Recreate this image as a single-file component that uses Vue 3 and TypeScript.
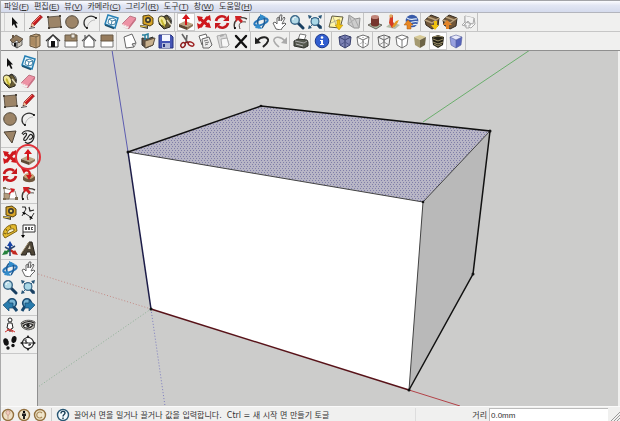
<script setup lang="ts">
import { ref } from 'vue'

interface Tool {
  id: string
  label: string
}
type Group = Tool[]

const t = (id: string, label: string): Tool => ({ id, label })

const menus: { name: string; key: string }[] = [
  { name: '파일', key: 'F' },
  { name: '편집', key: 'E' },
  { name: '뷰', key: 'V' },
  { name: '카메라', key: 'C' },
  { name: '그리기', key: 'R' },
  { name: '도구', key: 'T' },
  { name: '창', key: 'W' },
  { name: '도움말', key: 'H' },
]

const mainGroups: Group[] = [
  [t('select', '선택')],
  [t('pencil', '선'), t('rect', '사각형'), t('circle', '원'), t('arc', '호')],
  [t('component', '구성요소 만들기'), t('eraser', '지우개'), t('tape', '줄자'), t('paint', '페인트')],
  [t('push', '밀기/끌기'), t('move', '이동'), t('rotate', '회전'), t('offset', '오프셋')],
  [t('orbit', '궤도'), t('pan', '팬'), t('zoom', '확대/축소'), t('extents', '범위 확대')],
  [t('map', '위치 추가'), t('terrain', '지형 토글')],
  [t('building', '건물 추가'), t('texture', '사진 텍스처'), t('earth', '지구에서 미리보기')],
  [t('getmodel', '모델 가져오기'), t('sharemodel', '모델 공유'), t('sharecomp', '구성요소 공유')],
]

const viewGroups: Group[] = [
  [t('iso', '등각'), t('top', '위'), t('front', '정면'), t('right', '오른쪽'), t('back', '뒤'), t('left', '왼쪽')],
]
const fileGroups: Group[] = [
  [t('new', '새로 만들기'), t('open', '열기'), t('save', '저장')],
  [t('cut', '잘라내기'), t('copy', '복사'), t('paste', '붙여넣기'), t('delete', '지우기')],
  [t('undo', '실행 취소'), t('redo', '다시 실행')],
  [t('print', '인쇄')],
  [t('info', '모델 정보')],
]
const styleGroups: Group[] = [
  [t('xray', 'X선'), t('backedges', '뒤쪽 가장자리')],
  [t('wire', '와이어프레임'), t('hidden', '숨은선'), t('shaded', '음영'), t('textured', '텍스처 음영'), t('mono', '단색')],
]
const secondRow: Group[][] = [viewGroups, fileGroups, styleGroups]

const sideGroups: Group[] = [
  [t('select', '선택'), t('component', '구성요소 만들기'), t('paint', '페인트'), t('eraser', '지우개')],
  [t('rect', '사각형'), t('pencil', '선'), t('circle', '원'), t('arc', '호'), t('polygon', '다각형'), t('freehand', '자유곡선')],
  [t('move', '이동'), t('push', '밀기/끌기'), t('rotate', '회전'), t('follow', '따라가기'), t('scale', '배율'), t('offset', '오프셋')],
  [t('tape', '줄자'), t('dimension', '치수'), t('protractor', '각도기'), t('text', '텍스트'), t('axes', '축'), t('text3d', '3D 텍스트')],
  [t('orbit', '궤도'), t('pan', '팬'), t('zoom', '확대/축소'), t('extents', '범위 확대'), t('previous', '이전'), t('next', '다음')],
  [t('camera', '카메라 배치'), t('look', '둘러보기'), t('walk', '이동 보기'), t('section', '단면')],
]

const active = ref('push')
const renderStyle = ref('textured')
const distance = ref('0.0mm')

function choose(id: string) {
  active.value = id
}
function isStyle(id: string) {
  return renderStyle.value === id
}
</script>

<template>
  <div class="window">
    <svg class="defs" aria-hidden="true">
      <defs>
        <symbol id="select" viewBox="0 0 16 16"><path d="M5 3v9l2-2 2 4 1.500-.7-1.800-3.800H11z" fill="#111" /></symbol>
        <symbol id="pencil" viewBox="0 0 16 16"><path d="M1 14.500l6-1" stroke="#555" fill="none" /><path d="M3 13l1-4 8-8 2.500 2-8 8.500z" fill="#c81c20" stroke="#7c1414" stroke-width=".6" /><path d="M3 13l1-4 2.400 2.500z" fill="#eecb9d" /><path d="M5 9l7-7" stroke="#f57d72" /><path d="M2.500 13.500l1-1.500.6.700z" fill="#111" /></symbol>
        <symbol id="rect" viewBox="0 0 16 16"><path d="M2 3l12-1 1 11-12 1z" fill="#9c8467" stroke="#4d4336" stroke-width=".8" /><path d="M1 2h2v2H1zM13 1h2v2h-2zM14 12h2v2h-2zM2 13h2v2H2z" fill="#4a4238" /></symbol>
        <symbol id="circle" viewBox="0 0 16 16"><circle cx="8" cy="8" r="6.300" fill="#9c8467" stroke="#51483b" /></symbol>
        <symbol id="arc" viewBox="0 0 16 16"><path d="M14 4C9 0 2 3 2 9c0 3 1 4 3 5" fill="none" stroke="#333" stroke-width="1.300" /><path d="M5 14c1-5 4-8 8-8" fill="none" stroke="#aaa" stroke-width=".8" /><circle cx="5" cy="14" r="1" /><circle cx="14" cy="4" r="1" /></symbol>
        <symbol id="polygon" viewBox="0 0 16 16"><path d="M2 3l12-1-4 12z" fill="#9c8467" stroke="#4d4336" /></symbol>
        <symbol id="freehand" viewBox="0 0 16 16"><path d="M2 5C4 0 14 1 14 7s-6 9-9 6M3 6c3-4 5-1 2 2s0 5 2 2 3-6 5-4-1 5-3 4" fill="none" stroke="#222" stroke-width="1.200" /></symbol>
        <symbol id="component" viewBox="0 0 16 16"><path d="M5 1l10 3-3 10-10-4z" fill="#e3f3fa" stroke="#2680b5" stroke-width="1.500" /><path d="M6 5l4-1 3 2-1 4-4 1-3-2z" fill="#fff" stroke="#1d668f" stroke-width=".8" /><path d="M6 5l3 2 4-1M9 7l-1 4" fill="none" stroke="#1d668f" stroke-width=".8" /><path d="M2 11l9 3.500" stroke="#1e516e" stroke-width="1.500" /></symbol>
        <symbol id="eraser" viewBox="0 0 16 16"><path d="M1 10l8-8 6 2-7 9z" fill="#ed92a5" stroke="#a75c6c" stroke-width=".7" /><path d="M1 10v3l6 2 1-2 7-9v2l-7 9-7-2z" fill="#c86c81" /><path d="M1 10l7 3" stroke="#ffd1d7" /></symbol>
        <symbol id="tape" viewBox="0 0 16 16"><path d="M4 2l6-1 4 3v6l-3 2-7-2z" fill="#d8a426" stroke="#55420e" /><circle cx="9" cy="6" r="3" fill="#3c3a31" /><circle cx="9" cy="6" r="1.300" fill="#e4cf70" /><path d="M1 11l8 1v3l-8-2z" fill="#3e3c35" /><path d="M1 12l7 1" stroke="#e9c746" /></symbol>
        <symbol id="paint" viewBox="0 0 16 16"><path d="M4 4l6-3 4 6-1 6-6 2-5-5z" fill="#695d35" stroke="#2d2a20" /><ellipse cx="5.500" cy="7" rx="3.800" ry="5.200" transform="rotate(-28 5.500 7)" fill="#f1e899" stroke="#393424" /><path d="M4 6c2 1 1 5 4 6" stroke="#c5b730" stroke-width="2" fill="none" /><path d="M8 2c6-1 7 4 6 8" stroke="#333" fill="none" /><path d="M10 6l4 5" stroke="#ddd6bd" stroke-width="1.500" /></symbol>
        <symbol id="push" viewBox="0 0 16 16"><path d="M1 10l6-3 8 3-6 3z" fill="#bba481" /><path d="M1 10l8 3v3l-8-3z" fill="#5f4a34" /><path d="M9 13l6-3v2l-6 4z" fill="#8b7457" /><path d="M7 11V5H4l4-5 4 5H9v6z" fill="#d5161b" /></symbol>
        <symbol id="move" viewBox="0 0 16 16"><path d="M3 4l10 8M12 3L4 13" stroke="#cf181d" stroke-width="3" /><path d="M1 2l6 1-4 5zM14 1l1 6-6-3zM15 14l-6-1 4-5zM2 15l-1-6 6 3z" fill="#cf181d" /></symbol>
        <symbol id="rotate" viewBox="0 0 16 16"><path d="M2 7c1-5 7-6 10-3M14 9c-1 5-7 6-10 3" fill="none" stroke="#c7191e" stroke-width="2.600" /><path d="M15 1v6H9zM1 15V9h6z" fill="#c7191e" /></symbol>
        <symbol id="offset" viewBox="0 0 16 16"><path d="M3 15C0 7 7 1 15 5" fill="none" stroke="#433b36" stroke-width="1.400" /><path d="M8 15c-2-5 0-8 6-7" fill="none" stroke="#58504a" /><path d="M3 2l7 0-2 2 3 3-2 2-3-3-2 2z" fill="#cf2023" /><circle cx="3" cy="14" r="1" /></symbol>
        <symbol id="follow" viewBox="0 0 16 16"><path d="M3 10c2-4 10-4 12 0v3c-2 3-9 3-12 0z" fill="#6e563d" /><ellipse cx="9" cy="9" rx="5" ry="3" fill="#c6a273" /><path d="M4 4c5-2 7 2 5 6" stroke="#d61a1e" stroke-width="2.200" fill="none" /><path d="M1 1h6L4 7z" fill="#cf181d" /><path d="M6 8l3 5 3-5z" fill="#cf181d" /></symbol>
        <symbol id="scale" viewBox="0 0 16 16"><path d="M2 3l11 3 2 8-12 0z" fill="#fff" stroke="#8a8176" /><path d="M2 8l6 1-1 5H2z" fill="#b49d7e" stroke="#685c4b" stroke-width=".7" /><path d="M7 9l4-4" stroke="#cf1c20" stroke-width="1.500" /><path d="M8 3l5 1-2 4z" fill="#cf1c20" /><path d="M1 2h3v2H1zM13 12h3v3h-3zM1 13h3v2H1z" fill="#7b6a50" /></symbol>
        <symbol id="orbit" viewBox="0 0 16 16"><ellipse cx="8" cy="8" rx="7" ry="2.800" transform="rotate(-20 8 8)" fill="none" stroke="#2979bd" stroke-width="2" /><path d="M6 14C3 9 5 2 9 2c4 1 3 9 0 12" fill="none" stroke="#215b91" stroke-width="1.600" /><path d="M7 0l6 3-6 3zM5 9l4 6-7-1z" fill="#338dcb" /></symbol>
        <symbol id="pan" viewBox="0 0 16 16"><path d="M5 15L2 9l2-1 2 2V4l2-1v4l1-6 2 0-1 6 3-4 1 1-3 6 3-1 1 1-4 4-1 2z" fill="#fff" stroke="#555" stroke-width=".9" /></symbol>
        <symbol id="zoom" viewBox="0 0 16 16"><path d="M9 9l5 5" stroke="#193f61" stroke-width="3" stroke-linecap="round" /><circle cx="6" cy="6" r="4.300" fill="#b3dae7" stroke="#3a6788" stroke-width="1.400" /><path d="M4 6c0-2 1-3 3-3" stroke="#fff" fill="none" /></symbol>
        <symbol id="extents" viewBox="0 0 16 16"><path d="M1 1l4 1-3 3zM15 1l-1 4-3-3zM1 15l1-4 3 3zM15 15l-4-1 3-3z" fill="#2b5778" /><path d="M3 3l10 10M13 3L3 13" stroke="#38678a" /><path d="M10 10l4 4" stroke="#193f61" stroke-width="3" /><circle cx="8" cy="7.500" r="3.900" fill="#aad8e7" stroke="#3a6788" stroke-width="1.200" /></symbol>
        <symbol id="previous" viewBox="0 0 16 16"><path d="M11 9l4 5" stroke="#17486f" stroke-width="3" /><circle cx="10" cy="6" r="4.300" fill="#79b5d5" stroke="#17486f" stroke-width="1.600" /><path d="M1 8l6-5v3h4v5H7v3z" fill="#297cad" stroke="#16466c" stroke-width=".7" /></symbol>
        <symbol id="next" viewBox="0 0 16 16"><path d="M5 9l-3 5" stroke="#17486f" stroke-width="3" /><circle cx="7" cy="6" r="4.300" fill="#79b5d5" stroke="#17486f" stroke-width="1.600" /><path d="M15 8L9 3v3H5v5h4v3z" fill="#297cad" stroke="#16466c" stroke-width=".7" /></symbol>
        <symbol id="map" viewBox="0 0 16 16"><path d="M4 2l11 1-3 11-11-1z" fill="#fff6a8" stroke="#5e5a40" /><path d="M3 9l9-4M5 3l4 10" stroke="#b4b296" /><path d="M9 6h3v5h3l-4 5-4-5h2z" fill="#f0c20e" stroke="#b78b05" stroke-width=".5" /></symbol>
        <symbol id="terrain" viewBox="0 0 16 16"><path d="M3 1l6 4 5-1-1 10-5 0-6-4z" fill="#cdcdcd" stroke="#929292" /><path d="M3 1l5 13M9 5l-7 5M9 5l4 9" stroke="#a9a9a9" /></symbol>
        <symbol id="building" viewBox="0 0 16 16"><path d="M1 11l6-3 8 3-6 4z" fill="#a9bda2" stroke="#6a655e" /><path d="M4 3v8c2 2 6 2 8 0V3z" fill="#76352c" /><ellipse cx="8" cy="3" rx="4" ry="2" fill="#c18478" /></symbol>
        <symbol id="texture" viewBox="0 0 16 16"><path d="M1 13l6-5 8 3-5 4z" fill="#b4bca7" /><path d="M5 2l3-1v7l2 4-3 2-3-5z" fill="#d53b22" /><path d="M7 13c3 1 5-3 7-7l-3 1-3 4z" fill="#e49b24" /><circle cx="6" cy="2" r="1.700" fill="#dcaa62" /></symbol>
        <symbol id="earth" viewBox="0 0 16 16"><circle cx="9" cy="7" r="6.300" fill="#395ba9" /><path d="M4 4c4 3 7 0 10 1M3 8c5 2 8-2 12 0M5 12c4 0 7-3 9-1" stroke="#e0edfa" stroke-width="1.200" fill="none" /><path d="M4 15v-4H1l4-5 5 5H8v4z" fill="#e88723" stroke="#a65a10" stroke-width=".5" /></symbol>
        <symbol id="crate" viewBox="0 0 16 16"><path d="M1 6l6-5 8 3-1 8-6 3-6-4z" fill="#70573a" stroke="#332b20" /><path d="M1 6l7 3 7-5M4 3l8 3" stroke="#b9a17b" stroke-width="1.400" fill="none" /></symbol>
        <symbol id="getmodel" viewBox="0 0 16 16"><use href="#crate" /><path d="M10 7h3v4h2l-4 5-4-5h3z" fill="#f0c20e" /></symbol>
        <symbol id="sharemodel" viewBox="0 0 16 16"><use href="#crate" /><path d="M4 15v-4H1l4-5 5 5H7v4z" fill="#e38529" /></symbol>
        <symbol id="sharecomp" viewBox="0 0 16 16"><path d="M5 2l9 2 1 6-4 4-9-3 3-3z" fill="#fafafa" stroke="#aaa" /><path d="M5 2v6l8 2 1-6M6 14v-3H4l4-4 3 4H9v3z" fill="#f3f3f3" stroke="#aaa" /></symbol>

        <symbol id="iso" viewBox="0 0 16 16"><path d="M3 8l5 2v5l-5-3z" fill="#eee" stroke="#444" stroke-width=".8" /><path d="M8 10l5-3v5l-5 3z" fill="#cbc5ba" stroke="#444" stroke-width=".8" /><path d="M1 7l6-5 7 4-4 4-2-3-4 3z" fill="#927a5d" stroke="#443b31" stroke-width=".7" /><path d="M3 2h2v3H3z" fill="#655441" /><path d="M5 10h2v4l-2-1z" fill="#111" /></symbol>
        <symbol id="top" viewBox="0 0 16 16"><path d="M3 3l6-2 4 1v11l-4 2-6-2z" fill="#c0a077" stroke="#67563f" /><path d="M9 3v12M3 3l6 1 4-2" stroke="#725e43" fill="none" /><path d="M4 4l4 1v8l-4-1z" fill="#ab8a61" /></symbol>
        <symbol id="front" viewBox="0 0 16 16"><path d="M3 8v6h10V8L8 2z" fill="#fff" stroke="#333" /><path d="M1 8l7-6 7 6" fill="none" stroke="#333" stroke-width="1.400" /><path d="M6 8h4v6H6z" fill="#111" /></symbol>
        <symbol id="right" viewBox="0 0 16 16"><path d="M2 7h12v7H2z" fill="#fff" stroke="#777" /><path d="M2 2h12v6H2z" fill="#9b8466" stroke="#685a47" /><path d="M8 1h4v4H8z" fill="#e8e4dc" stroke="#776955" /></symbol>
        <symbol id="back" viewBox="0 0 16 16"><path d="M3 8v6h10V8L8 2z" fill="#fff" stroke="#555" /><path d="M1 8l7-6 7 6M4 2v4" fill="none" stroke="#555" stroke-width="1.200" /></symbol>
        <symbol id="left" viewBox="0 0 16 16"><path d="M2 7h12v7H2z" fill="#fff" stroke="#777" /><path d="M2 2h12v6H2z" fill="#967b5c" stroke="#685a47" /></symbol>
        <symbol id="new" viewBox="0 0 16 16"><path d="M2 4l8-3 4 9-2 4-8 1z" fill="#fff" stroke="#666" /><path d="M14 10l-4 1 2 3" fill="#ccc" stroke="#666" /></symbol>
        <symbol id="open" viewBox="0 0 16 16"><path d="M2 5l5 1 6-2v8l-7 3-4-3z" fill="#645344" stroke="#31312f" /><path d="M5 8l10-3-2 7-8 3z" fill="#c9b18e" stroke="#5d5140" /><path d="M2 2h3v5M5 2l3-1v5" fill="none" stroke="#277f9d" stroke-width="1.500" /></symbol>
        <symbol id="save" viewBox="0 0 16 16"><path d="M1 2h12l2 2v11H1z" fill="#4555b5" stroke="#26337c" /><path d="M4 2h8v6H4z" fill="#f5f7ff" /><path d="M4 10h8v5H4z" fill="#b2bada" /><path d="M5 11h2v3H5z" fill="#26337c" /></symbol>
        <symbol id="cut" viewBox="0 0 16 16"><path d="M3 1l6 9M8 2l-1 8" stroke="#666" stroke-width="1.600" /><ellipse cx="4" cy="12" rx="2" ry="2.500" transform="rotate(35 4 12)" fill="none" stroke="#8d1e1e" stroke-width="1.500" /><ellipse cx="12" cy="11" rx="3" ry="1.800" transform="rotate(25 12 11)" fill="none" stroke="#9e2424" stroke-width="1.500" /><path d="M6 10l2-1 2 1" stroke="#8d1e1e" stroke-width="1.500" fill="none" /></symbol>
        <symbol id="copy" viewBox="0 0 16 16"><path d="M2 3l7-2 3 8-7 3z" fill="#fff" stroke="#666" /><path d="M5 6l7-2 3 8-3 3-6 0z" fill="#eee" stroke="#666" /><path d="M7 8l4-1M8 10l4-1M8 12l3-1" stroke="#777" /></symbol>
        <symbol id="paste" viewBox="0 0 16 16"><path d="M2 3l9-2 3 11-9 3z" fill="#dadada" stroke="#aaa" /><path d="M6 6l6-1 2 7-2 2-5 0z" fill="#f7f7f7" stroke="#aaa" /><path d="M5 2l3-1 1 2-4 1z" fill="#aaa" /></symbol>
        <symbol id="delete" viewBox="0 0 16 16"><path d="M3 3l10 11M13 3L3 14" stroke="#111" stroke-width="2.400" stroke-linecap="round" /></symbol>
        <symbol id="undo" viewBox="0 0 16 16"><path d="M3 8c5-6 12-4 11 0-1 3-3 4-5 6" fill="none" stroke="#222" stroke-width="2" /><path d="M1 4v7l6-1z" fill="#222" /></symbol>
        <symbol id="redo" viewBox="0 0 16 16"><path d="M13 8C8 2 1 4 2 8c1 3 3 4 5 6" fill="none" stroke="#aaa" stroke-width="1.600" /><path d="M15 4v7l-6-1z" fill="#aaa" /></symbol>
        <symbol id="print" viewBox="0 0 16 16"><path d="M5 7l2-6 6 1-2 6z" fill="#fff" stroke="#777" /><path d="M1 8l4-2 9 1 1 2v4l-4 2-10-2z" fill="#55594f" stroke="#2e302b" /><path d="M2 8l9 2 3-2" stroke="#aaa" fill="none" /><path d="M3 11l7 2" stroke="#bbb" /></symbol>
        <symbol id="info" viewBox="0 0 16 16"><circle cx="8" cy="8" r="6.800" fill="#315ed0" stroke="#1c388b" /><circle cx="8" cy="4.500" r="1.300" fill="#fff" /><path d="M6 7h3v4h1v1H6v-1h1V8H6z" fill="#fff" /></symbol>
        <symbol id="cube" viewBox="0 0 16 16"><path d="M2 4l6-2 6 2-1 8-5 3-5-3z" /><path d="M2 4l6 3 6-3M8 7v8" fill="none" /></symbol>
        <symbol id="xray" viewBox="0 0 16 16"><use href="#cube" fill="#7d83b5" stroke="#39406d" /><path d="M3 12l5-3 5 3M8 2v7" stroke="#4f568b" fill="none" /></symbol>
        <symbol id="backedges" viewBox="0 0 16 16"><use href="#cube" fill="#fff" stroke="#666" stroke-width=".9" /><path d="M3 12l5-3 5 3M8 2v7" stroke="#888" stroke-dasharray="1 1" fill="none" /></symbol>
        <symbol id="wire" viewBox="0 0 16 16"><use href="#cube" fill="#f4f4f4" stroke="#555" stroke-width=".9" /><path d="M3 12l5-3 5 3M8 2v7" stroke="#777" fill="none" stroke-width=".8" /></symbol>
        <symbol id="hidden" viewBox="0 0 16 16"><use href="#cube" fill="#fff" stroke="#666" stroke-width=".9" /></symbol>
        <symbol id="shaded" viewBox="0 0 16 16"><path d="M2 4l6-2 6 2-6 3z" fill="#d7ca96" /><path d="M2 4l6 3v8l-5-3z" fill="#a59a70" /><path d="M8 7l6-3-1 8-5 3z" fill="#6d6447" /></symbol>
        <symbol id="textured" viewBox="0 0 16 16"><path d="M2 4l6-2 6 2-1 8-5 3-5-3z" fill="#262317" /><path d="M3 4l5-1 5 1M3 6l5 2 5-2M3 9l5 2 5-2M4 11l4 2 4-2" fill="none" stroke="#9c9069" /></symbol>
        <symbol id="mono" viewBox="0 0 16 16"><path d="M2 4l6-2 6 2-6 3z" fill="#e9eafa" /><path d="M2 4l6 3v8l-5-3z" fill="#98a1df" /><path d="M8 7l6-3-1 8-5 3z" fill="#5664bb" /><use href="#cube" fill="none" stroke="#535d9c" stroke-width=".6" /></symbol>

        <symbol id="dimension" viewBox="0 0 16 16"><path d="M3 7l9 6M2 11l4-7M10 15l4-7" stroke="#333" fill="none" /><path d="M2 2l3 0 1 2M9 2l1 4 4-1" stroke="#222" fill="none" stroke-width="1.200" /><path d="M2 7l4 1-2 2zM13 14l-4-1 2-2z" /></symbol>
        <symbol id="protractor" viewBox="0 0 16 16"><path d="M1 12C1 5 8 0 14 2l1 6-12 7z" fill="#e3b92d" stroke="#806515" /><path d="M5 11c0-3 3-6 7-5v2z" fill="#f7efcb" stroke="#806515" /><path d="M2 10l2 1M4 6l1 2M8 3l1 2" stroke="#6d5510" /></symbol>
        <symbol id="text" viewBox="0 0 16 16"><path d="M3 2h12v7H3z" fill="#fff" stroke="#333" /><path d="M5 4h2v3H5zM8 4h2v3H8zM11 4h2v1h-1v1h1v1h-2z" fill="#555" /><path d="M3 9v5" stroke="#333" /><path d="M1 12h4l-2 3z" /></symbol>
        <symbol id="axes" viewBox="0 0 16 16"><path d="M8 9V3" stroke="#1844a4" stroke-width="2.400" /><path d="M8 0l3 5H5z" fill="#1844a4" /><path d="M8 9l5 3" stroke="#c2271e" stroke-width="2.400" /><path d="M16 14l-6-1 3-4z" fill="#c2271e" /><path d="M8 9l-5 3" stroke="#24813b" stroke-width="2.400" /><path d="M0 14l6-1-3-4z" fill="#24813b" /><path d="M8 8l5-3M8 9l-5-3M8 9v6" stroke="#2a4570" stroke-width="1.500" /></symbol>
        <symbol id="text3d" viewBox="0 0 16 16"><path d="M1 14l8-13h3l3 13h-4l-.5-3H7l-1 3z" fill="#4f4637" stroke="#28241e" /><path d="M8 8l2-4 .5 4z" fill="#d9cfb9" /><path d="M1 13l8-12" stroke="#a39475" /></symbol>
        <symbol id="camera" viewBox="0 0 16 16"><circle cx="8" cy="3" r="2" fill="#fff" stroke="#222" /><path d="M6 6h4l1 5-2 1v2H7v-2l-2-1z" fill="#fff" stroke="#222" /><path d="M3 15l5-3 5 3M5 12l6 3" stroke="#cb3431" fill="none" /></symbol>
        <symbol id="look" viewBox="0 0 16 16"><path d="M1 6c4-4 11-3 14-1l-1 6c-5 3-9 2-12-1z" fill="#c9c5bd" stroke="#555" /><path d="M2 7c4-3 8-3 12-1M3 9c3-3 8-3 10-1-3 4-8 4-10 1" fill="#f5f5f2" stroke="#222" stroke-width="1.300" /><circle cx="8" cy="8.500" r="1.800" fill="#222" /></symbol>
        <symbol id="walk" viewBox="0 0 16 16"><ellipse cx="4" cy="7" rx="2.600" ry="3.800" transform="rotate(-15 4 7)" fill="#111" /><ellipse cx="6" cy="13" rx="1.700" ry="1.800" fill="#111" /><ellipse cx="12" cy="4.500" rx="2.500" ry="3.600" transform="rotate(12 12 4.500)" fill="#111" /><ellipse cx="11" cy="10.500" rx="1.700" ry="1.800" fill="#111" /></symbol>
        <symbol id="section" viewBox="0 0 16 16"><circle cx="8" cy="8" r="5.500" fill="#fff" stroke="#222" stroke-width="1.200" /><path d="M2.500 8h11M7 5H5v1l2 1v1H5M9 11v-2h1.500v1H9" fill="none" stroke="#333" /><path d="M8 0l2 3H6zM8 16l2-3H6zM0 8l3-2v4zM16 8l-3-2v4z" fill="#222" /></symbol>
        <pattern id="dots" width="3" height="4" patternUnits="userSpaceOnUse">
          <rect width="3" height="4" fill="#b8b6c6" />
          <rect width="1" height="1" fill="#807ea8" />
          <rect x="1" y="2" width="1" height="1" fill="#807ea8" />
        </pattern>
      </defs>
    </svg>

    <nav class="menubar">
      <button v-for="m in menus" :key="m.key" type="button">{{ m.name }}(<u>{{ m.key }}</u>)</button>
    </nav>

    <header class="toolbars">
      <div class="row main-row">
        <div class="bar">
          <div v-for="(group, i) in mainGroups" :key="i" class="group">
            <button v-for="tool in group" :key="tool.id" type="button" class="tool"
              :class="{ pressed: active === tool.id }" :aria-label="tool.label" @click="choose(tool.id)">
              <svg class="icon"><use :href="'#' + tool.id" /></svg>
            </button>
          </div>
        </div>
      </div>
      <div class="row">
        <div v-for="(bar, b) in secondRow" :key="b" class="bar grip">
          <div v-for="(group, i) in bar" :key="i" class="group">
            <button v-for="tool in group" :key="tool.id" type="button" class="tool"
              :class="{ pressed: isStyle(tool.id) }" :aria-label="tool.label">
              <svg class="icon"><use :href="'#' + tool.id" /></svg>
            </button>
          </div>
        </div>
      </div>
    </header>

    <main class="work">
      <aside class="side">
        <div v-for="(group, i) in sideGroups" :key="i" class="side-group">
          <button v-for="tool in group" :key="tool.id" type="button" class="tool"
            :class="{ marked: tool.id === 'push' }" :aria-label="tool.label" @click="choose(tool.id)">
            <svg class="icon"><use :href="'#' + tool.id" /></svg>
          </button>
        </div>
      </aside>
      <section class="viewport">
        <svg class="scene" viewBox="38 51 580 355" preserveAspectRatio="xMinYMin slice" role="img" aria-label="3D 모델">
          <g fill="none" stroke-dasharray="1 2">
            <path d="M151 309L38 274" stroke="#c48b86" />
            <path d="M151 309L38 387" stroke="#8fb096" />
            <path d="M151 309l14 97" stroke="#7d7dc0" />
          </g>
          <path d="M423 122L530 50" stroke="#6aae6c" fill="none" />
          <path d="M112 50l16 102" stroke="#5c5cb0" fill="none" />
          <path d="M409 390l51 16" stroke="#b24248" fill="none" />
          <path d="M128 152l295 50-14 188-258-81z" fill="#fff" />
          <path d="M423 202l67-71-17 143-64 116z" fill="#b9b9b9" />
          <path d="M128 152l133-46 229 25-67 71z" fill="url(#dots)" />
          <path d="M128 152l295 50 67-71M423 202l-14 188" stroke="#444" fill="none" />
          <path d="M128 152l133-46 229 25-17 143-64 116" stroke="#111" stroke-width="1.500" fill="none" />
          <path d="M128 152l23 157" stroke="#1c1c48" stroke-width="1.500" fill="none" />
          <path d="M151 309l258 81" stroke="#581319" stroke-width="1.500" fill="none" />
          <g fill="#111">
            <circle cx="128" cy="152" r="1.500" /><circle cx="261" cy="106" r="1.300" /><circle cx="490" cy="131" r="1.500" />
            <circle cx="423" cy="202" r="1.300" /><circle cx="473" cy="274" r="1.500" /><circle cx="409" cy="390" r="1.500" /><circle cx="151" cy="309" r="1.500" />
          </g>
        </svg>
      </section>
    </main>

    <footer class="status">
      <div class="badges">
        <svg viewBox="0 0 14 14"><circle cx="7" cy="7" r="5.500" fill="#eee0c5" stroke="#92703f" stroke-width="1.400" /><path d="M7 11V7M5 4.500a2 2 0 1 1 4 0c0 1-1 2-2 3-1-1-2-2-2-3" fill="#f0c9bd" stroke="#c9a08d" /></svg>
        <svg viewBox="0 0 14 14"><circle cx="7" cy="7" r="5.500" fill="#f0e5ca" stroke="#92703f" stroke-width="1.400" /><circle cx="7" cy="4" r="1.200" /><path d="M5 5.500h4V8H8v3H6V8H5z" fill="#222" /></svg>
        <svg viewBox="0 0 14 14"><circle cx="7" cy="7" r="5.500" fill="#f0e5ca" stroke="#92703f" stroke-width="1.400" /><path d="M9 5a3 3 0 1 0 0 4" fill="none" stroke="#a88b5b" stroke-width="1.200" /></svg>
      </div>
      <svg class="help" viewBox="0 0 14 14"><circle cx="7" cy="7" r="5.500" fill="#f4fafc" stroke="#275673" stroke-width="1.400" /><path d="M5 5.500c0-3 4-2.500 4-.5C9 6.500 7 6.500 7 8.500M7 9.500V11" fill="none" stroke="#173e57" stroke-width="1.400" /></svg>
      <p class="hint">끌어서 면을 밀거나 끌거나 값을 입력합니다.&nbsp; Ctrl = 새 시작 면 만들기 토글</p>
      <div class="measure">
        <label for="distance">거리</label>
        <input id="distance" v-model="distance" type="text" />
      </div>
      <svg class="resize" viewBox="0 0 10 12"><path d="M1 12L10 3M4 12l6-6M7 12l3-3" stroke="#999" fill="none" /></svg>
    </footer>
  </div>
</template>

<style>
body {
  margin: 0;
}
</style>

<style scoped>
.window {
  box-sizing: border-box;
  display: flex;
  flex-direction: column;
  min-height: 100vh;
  border-top: 1px solid #a3a4a8;
  border-left: 1px solid #aaa;
  background: #f0f0ef;
  color: #333;
  font-family: "Liberation Sans", "Noto Sans CJK KR", sans-serif;
  font-size: 8px;
}
.defs {
  position: absolute;
  width: 0;
  height: 0;
}
button {
  padding: 0;
  border: 0;
  background: none;
  color: inherit;
  font: inherit;
}
.menubar {
  display: flex;
  gap: 5px;
  height: 11px;
  padding-left: 3px;
  border-bottom: 1px solid #b3b5bd;
  background: linear-gradient(#fbfcff, #e2e6f3 40%, #d5dbed);
}
.menubar button {
  line-height: 11px;
  white-space: nowrap;
}
.toolbars {
  border-bottom: 1px solid #8f8f8f;
}
.row {
  display: flex;
  height: 18px;
}
.main-row {
  padding-left: 3px;
  border-bottom: 1px solid #c6c6c6;
}
.bar {
  display: flex;
  padding-left: 1px;
  border-right: 1px solid #c2c2c2;
}
.main-row .bar {
  border-left: 1px solid #d2d2d2;
}
.bar.grip {
  padding-left: 4px;
}
.bar.grip:first-child {
  padding-left: 7px;
}
.group {
  display: flex;
}
.group + .group {
  padding-left: 2px;
  border-left: 1px solid #c4c4c4;
}
.tool {
  display: grid;
  place-items: center;
  box-sizing: border-box;
  width: 18px;
  height: 18px;
}
.tool.pressed {
  border: 1px solid #ccc;
  background: #fff;
}
.icon {
  flex: none;
  width: 16px;
  height: 16px;
}
.work {
  display: flex;
  flex: 1;
}
.side {
  padding: 3px 0 0;
  border-right: 1px solid #8f8f8f;
}
.side-group {
  display: grid;
  grid-template-columns: repeat(2, 18px);
  padding-bottom: 1px;
  border-bottom: 1px solid #c8c8c8;
}
.marked {
  position: relative;
}
.marked::after {
  content: "";
  position: absolute;
  inset: -4px;
  border: 2px solid #e0323a;
  border-radius: 50%;
}
.viewport {
  flex: 1;
  min-width: 0;
  margin-right: 2px;
  background: #cccccb;
}
.scene {
  display: block;
  width: 100%;
  height: 100%;
}
.status {
  display: flex;
  align-items: center;
  height: 15px;
  border-top: 1px solid #fafafa;
}
.badges {
  display: flex;
  gap: 2px;
  margin-right: 4px;
  padding-right: 4px;
  border-right: 1px solid #ccc;
}
.badges svg,
.help {
  display: block;
  width: 14px;
  height: 14px;
}
.hint {
  flex: 1;
  margin: 0 0 0 4px;
  font-family: "DejaVu Sans", "Noto Sans CJK KR", sans-serif;
  white-space: nowrap;
}
.measure {
  display: flex;
  align-items: center;
  gap: 2px;
  width: 192px;
  border-left: 1px solid #ddd;
}
.measure label {
  flex: 1;
  text-align: right;
}
.measure input {
  box-sizing: border-box;
  width: 119px;
  height: 13px;
  padding: 0 1px;
  border: 0;
  border-top: 1px solid #bbb;
  border-left: 1px solid #bbb;
  background: #fff;
  color: #333;
  font: inherit;
}
.resize {
  width: 10px;
  height: 12px;
  margin-left: 2px;
}
</style>
